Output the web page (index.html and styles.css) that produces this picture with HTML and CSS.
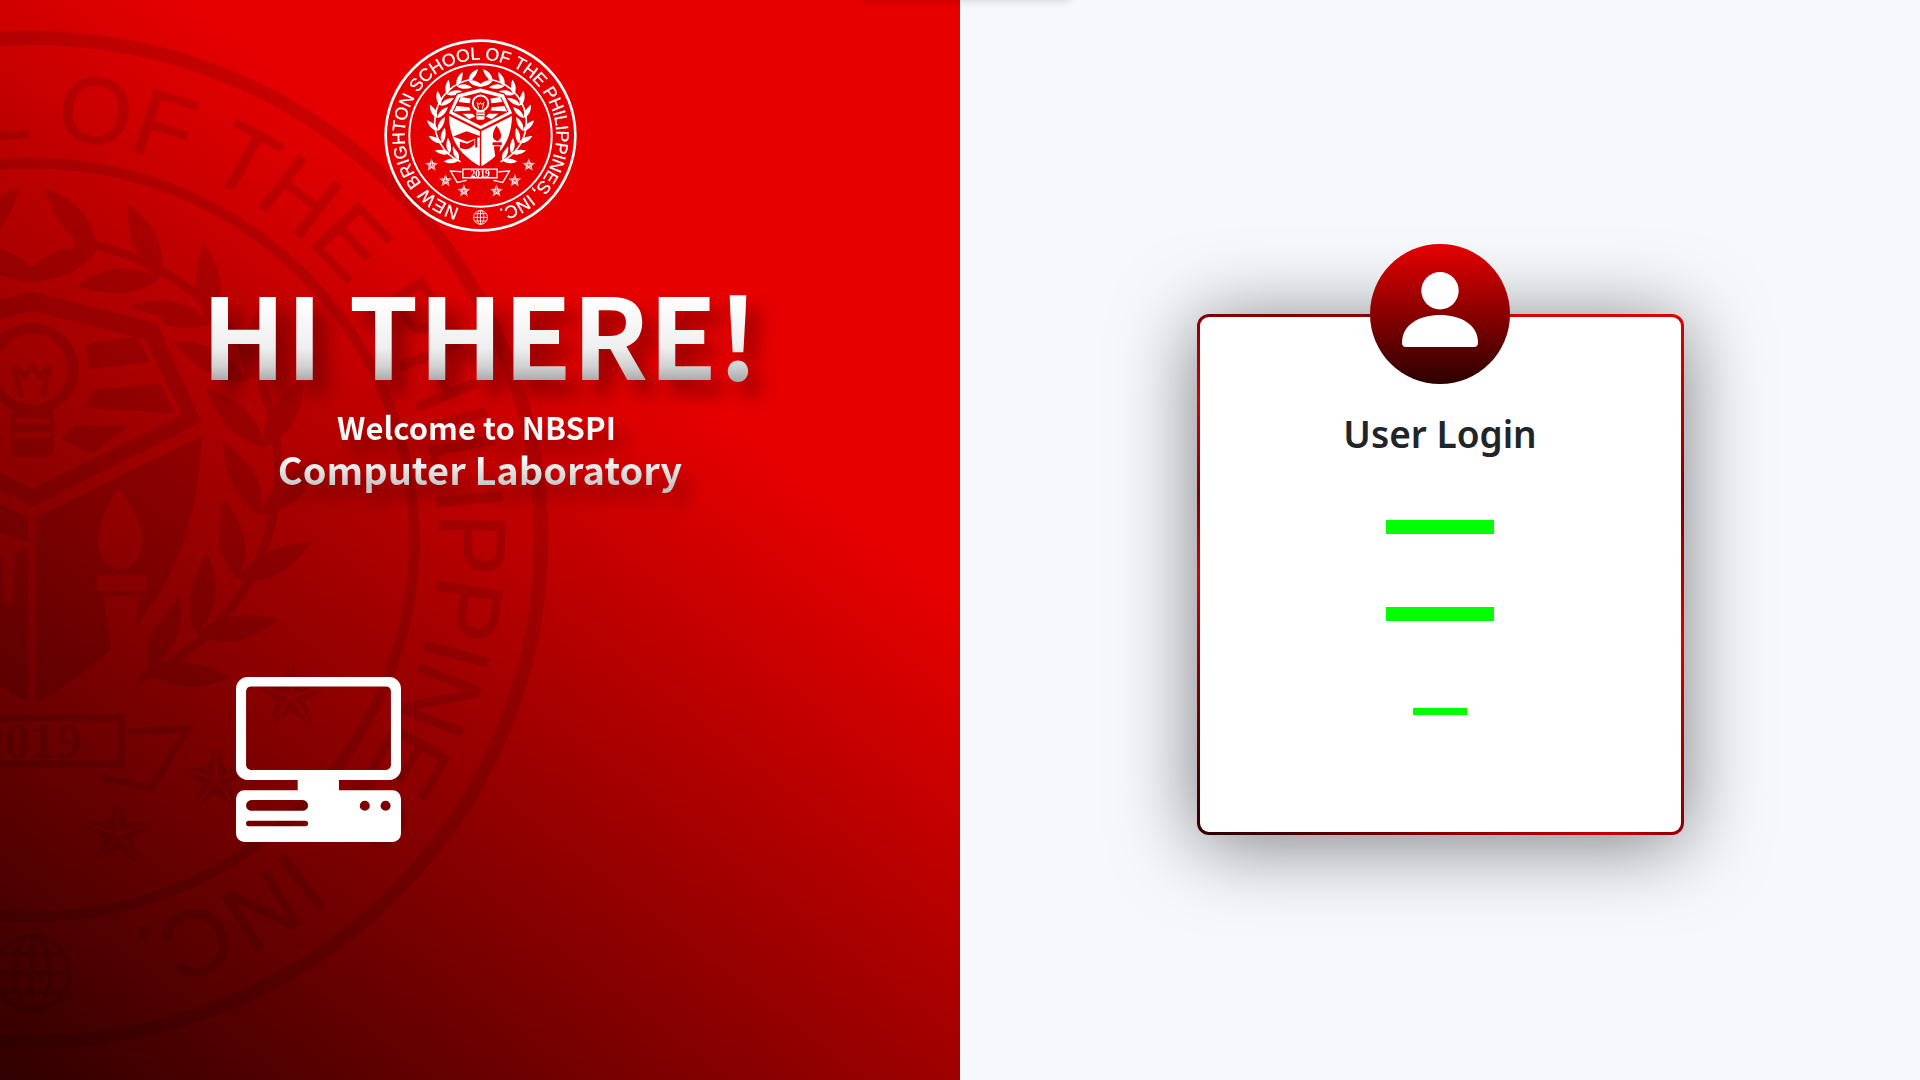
FILE: index.html
```html
<!DOCTYPE html>
<html lang="en">
<head>
<meta charset="utf-8">
<title>NBSPI Computer Laboratory</title>
<link rel="stylesheet" href="styles.css">
</head>
<body>
<main class="page">
  <section class="hero">
    <svg class="watermark" viewBox="70 60 580 578" preserveAspectRatio="none" aria-hidden="true"><use href="#seal"/></svg>
    <svg class="logo" viewBox="70 60 580 578" role="img" aria-label="New Brighton School of the Philippines seal">
      <defs>
        <path id="leaf" d="M0,0C-10,-12 -9,-30 2,-46C9,-30 9,-12 0,0Z"/>
        <g id="pair">
          <use href="#leaf" transform="translate(360,180) rotate(52)"/>
          <use href="#leaf" transform="translate(360,180) rotate(125)"/>
        </g>
        <g id="branch">
          <path d="M336,180A130,130 0 0 0 300,428" fill="none" stroke="#fff" stroke-width="5"/>
          <use href="#pair" transform="rotate(-16 360 310)"/>
          <use href="#pair" transform="rotate(-33 360 310)"/>
          <use href="#pair" transform="rotate(-50 360 310)"/>
          <use href="#pair" transform="rotate(-67 360 310)"/>
          <use href="#pair" transform="rotate(-84 360 310)"/>
          <use href="#pair" transform="rotate(-101 360 310)"/>
          <use href="#pair" transform="rotate(-118 360 310)"/>
          <use href="#pair" transform="rotate(-135 360 310)"/>
          <use href="#pair" transform="rotate(-150 360 310)"/>
        </g>
        <g id="star">
          <path fill="#fff" d="M0,-21L4.9,-6.8 20,-6.5 8,2.6 12.4,17 0,8.4 -12.4,17 -8,2.6 -20,-6.5 -4.9,-6.8Z"/>
          <path fill="none" stroke="#000" stroke-width="1.6" d="M0,0V-21M0,0L20,-6.5M0,0L12.4,17M0,0L-12.4,17M0,0L-20,-6.5"/>
        </g>
        <g id="rays">
          <path d="M330,238L301,233 294,248 328,252Z"/>
          <path d="M326,264L288,260 280,277 330,274Z"/>
          <path d="M336,284L306,284 326,300 344,292Z"/>
        </g>
        <mask id="art" maskUnits="userSpaceOnUse" x="70" y="60" width="580" height="578">
          <use href="#branch" fill="#fff"/>
          <use href="#branch" fill="#fff" transform="matrix(-1 0 0 1 720 0)"/>
          <path fill="#000" d="M262,282L288,222 360,204 432,222 458,282 458,340C450,395 400,425 360,450 320,425 270,395 262,340Z"/>
          <path fill="#fff" d="M265,282L290,226 360,208 430,226 455,282 360,330Z"/>
          <path fill="#000" d="M276,278L297,235 360,219 423,235 444,278 360,320Z"/>
          <g fill="#fff">
            <use href="#rays"/>
            <use href="#rays" transform="matrix(-1 0 0 1 720 0)"/>
            <path d="M265,290L358,336V442C310,412 268,378 265,290Z"/>
            <path d="M455,290L362,336V442C410,412 452,378 455,290Z"/>
            <circle cx="360" cy="252" r="26"/>
            <rect x="348" y="274" width="24" height="28" rx="4"/>
          </g>
          <g fill="#000">
            <circle cx="360" cy="252" r="20"/>
            <path d="M278,352L318,336 362,352 320,368Z"/>
            <path d="M298,368V386C312,394 330,390 342,376V362L320,374Z"/>
            <rect x="344" y="355" width="6" height="30"/>
            <path d="M408,320C392,345 394,362 410,366 426,362 426,340 408,320Z"/>
            <rect x="396" y="369" width="28" height="9" rx="2"/>
            <path d="M400,381H420L414,422H406Z"/>
            <rect x="350" y="280" width="20" height="3"/>
            <rect x="350" y="288" width="20" height="3"/>
          </g>
          <path fill="none" stroke="#fff" stroke-width="3" d="M354,268L350,250M366,268L370,250M350,250L356,256 360,250 364,256 370,250"/>
          <path fill="#000" d="M285,440H435V492H285Z"/>
          <path fill="#fff" d="M305,448H412V478H305Z"/>
          <path fill="#000" d="M309,452H408V474H309Z"/>
          <path fill="none" stroke="#fff" stroke-width="4" d="M303,458L270,456 290,490 318,484M414,458L447,456 427,490 399,484"/>
          <use href="#star" transform="translate(213,438)"/>
          <use href="#star" transform="translate(255,485)"/>
          <use href="#star" transform="translate(310,516)"/>
          <use href="#star" transform="translate(408,516)"/>
          <use href="#star" transform="translate(463,485)"/>
          <use href="#star" transform="translate(505,438)"/>
        </mask>
        <path id="ringline" d="M360,577A228,228 0 1 1 360,121A228,228 0 1 1 360,577"/>
        <g id="seal">
          <circle cx="360" cy="349" r="285" class="ring-outer"/>
          <circle cx="360" cy="349" r="214" class="ring-inner"/>
          <rect x="70" y="60" width="580" height="578" mask="url(#art)" class="seal-fill"/>
          <text class="seal-year" x="359" y="473" text-anchor="middle">2019</text>
          <text class="seal-name"><textPath href="#ringline" startOffset="64" textLength="738">NEW BRIGHTON SCHOOL OF</textPath></text>
          <text class="seal-name"><textPath href="#ringline" startOffset="815" textLength="562">THE PHILIPPINES, INC.</textPath></text>
          <g class="globe">
            <circle cx="360" cy="595" r="21"/>
            <ellipse cx="360" cy="595" rx="10" ry="21"/>
            <path d="M339,595H381M360,574V616M343,584H377M343,606H377"/>
          </g>
        </g>
      </defs>
      <use href="#seal"/>
    </svg>
    <h1 class="headline"><span class="metal">HI THERE!</span></h1>
    <div class="tagline">
      <p class="welcome"><span class="metal">Welcome to NBSPI&nbsp;</span></p>
      <p class="lab"><span class="metal">Computer Laboratory</span></p>
    </div>
    <svg class="computer" viewBox="78 85 492 492" aria-hidden="true">
      <path fill-rule="evenodd" d="M113,85H535A35,35 0 0 1 570,120V357A35,35 0 0 1 535,392H385V423H545A25,25 0 0 1 570,448V552A25,25 0 0 1 545,577H103A25,25 0 0 1 78,552V448A25,25 0 0 1 103,423H262V392H113A35,35 0 0 1 78,357V120A35,35 0 0 1 113,85ZM123,113A15,15 0 0 0 108,128V347A15,15 0 0 0 123,362H525A15,15 0 0 0 540,347V128A15,15 0 0 0 525,113ZM124,452A16,16 0 0 0 124,484H277A16,16 0 0 0 277,452ZM116,514A8,8 0 0 0 116,530H285A8,8 0 0 0 285,514ZM462,454A15,15 0 1 0 462,484A15,15 0 1 0 462,454ZM524,454A15,15 0 1 0 524,484A15,15 0 1 0 524,454Z"/>
    </svg>
  </section>
  <section class="auth">
    <div class="peek"></div>
    <div class="card">
      <div class="avatar">
        <svg class="avatar-icon" viewBox="0 0 140 140" aria-hidden="true">
          <circle cx="70" cy="46.700" r="18.700"/>
          <path d="M32,99C32,80 50,71 70,71C90,71 108,80 108,99C108,101.500 106.500,103 104,103H36C33.500,103 32,101.500 32,99Z"/>
        </svg>
      </div>
      <h2 class="card-title">User Login</h2>
      <div class="bar bar-wide bar-first"></div>
      <div class="bar bar-wide bar-second"></div>
      <div class="bar bar-short"></div>
    </div>
  </section>
</main>
</body>
</html>
```
FILE: styles.css
```css
* { box-sizing: border-box; }
html, body { margin: 0; height: 100%; }
body { font-family: "Noto Sans", sans-serif; background: #f6f8fc; overflow: hidden; }
.page { display: grid; grid-template-columns: 960px 960px; height: 1080px; }

.hero {
  position: relative;
  overflow: hidden;
  display: flex;
  flex-direction: column;
  align-items: center;
  padding-top: 39px;
  background: linear-gradient(38deg, #300000 0%, #e60000 67%);
  font-family: "Noto Sans CJK SC", "Noto Sans", sans-serif;
  color: #fff;
}
.watermark {
  position: absolute;
  left: -486px;
  top: 31px;
  width: 1036px;
  height: 1018px;
  color: #000;
  opacity: .115;
  filter: blur(.6px);
}
.logo { position: relative; width: 193px; height: 193px; color: #fff; flex: none; filter: blur(.25px); }
.ring-outer { fill: none; stroke: currentColor; stroke-width: 8; }
.ring-inner { fill: none; stroke: currentColor; stroke-width: 6; }
.seal-fill { fill: currentColor; }
.seal-year { fill: currentColor; font: 700 29px "Liberation Serif", serif; }
.seal-name { fill: currentColor; stroke: currentColor; stroke-width: .8px; font: 400 53px "Liberation Sans", Arial, sans-serif; }
.globe { fill: none; stroke: currentColor; stroke-width: 2.5; }

.metal {
  display: inline-block;
  background: linear-gradient(180deg, #fff 20%, #efefef 65%, #d0d0d0 82%, #aaa 94%);
  -webkit-background-clip: text;
  background-clip: text;
  color: transparent;
}
.headline {
  position: relative;
  margin: 43px 0 0;
  font-size: 112px;
  line-height: 112px;
  font-weight: 700;
  white-space: nowrap;
  filter: drop-shadow(12px 14px 9px rgba(0,0,0,.35));
}
.tagline { position: relative; text-align: center; margin-top: 23px; filter: drop-shadow(10px 14px 8px rgba(0,0,0,.3)); }
.welcome { margin: 0; font-size: 31px; line-height: 34px; font-weight: 700; }
.welcome .metal { background-image: linear-gradient(180deg, #fff, #f4f4f4); }
.lab { margin: 0; font-size: 38px; line-height: 50px; font-weight: 700; }
.lab .metal { background-image: linear-gradient(180deg, #fff 25%, #c4c4c4 85%); }
.computer {
  position: relative;
  align-self: flex-start;
  margin: 183px 0 0 236px;
  width: 165px;
  height: 165px;
  fill: #fff;
  filter: blur(.4px);
}

.auth {
  position: relative;
  display: flex;
  justify-content: center;
  padding-top: 314px;
  background: #f6f8fc;
}
.peek {
  position: absolute;
  left: -100px;
  top: -12px;
  width: 210px;
  height: 12px;
  box-shadow: 0 0 10px rgba(0,0,0,.18);
}
.card {
  position: relative;
  width: 487px;
  height: 521px;
  display: flex;
  flex-direction: column;
  align-items: center;
  border: 3px solid transparent;
  border-radius: 12px;
  background:
    linear-gradient(#fff, #fff) padding-box,
    conic-gradient(from 0deg at 50% 50%, #a00000 0deg, #d80000 12deg, #d80000 43deg, #800000 72deg, #d80000 105deg, #880000 137deg, #c80000 146deg, #300000 222deg, #d80000 270deg, #800000 289deg, #d80000 306deg, #800000 318deg, #8b0000 350deg, #a00000 360deg) border-box;
  box-shadow: 0 8px 80px rgba(0,0,0,.5);
}
.avatar {
  position: absolute;
  left: 50%;
  top: -73px;
  width: 140px;
  height: 140px;
  margin-left: -70px;
  border-radius: 50%;
  background: linear-gradient(180deg, #e60000 0%, #2c0000 100%);
}
.avatar-icon { display: block; width: 140px; height: 140px; fill: #fff; }
.card-title {
  margin: 93px 0 0;
  font-size: 37px;
  line-height: 48px;
  font-weight: 600;
  color: #212529;
}
.bar { background: #00ff00; flex: none; }
.bar-wide { width: 108px; height: 14px; }
.bar-short { width: 54px; height: 7px; margin-top: 87px; }
.bar-first { margin-top: 62px; }
.bar-second { margin-top: 73px; }
```
